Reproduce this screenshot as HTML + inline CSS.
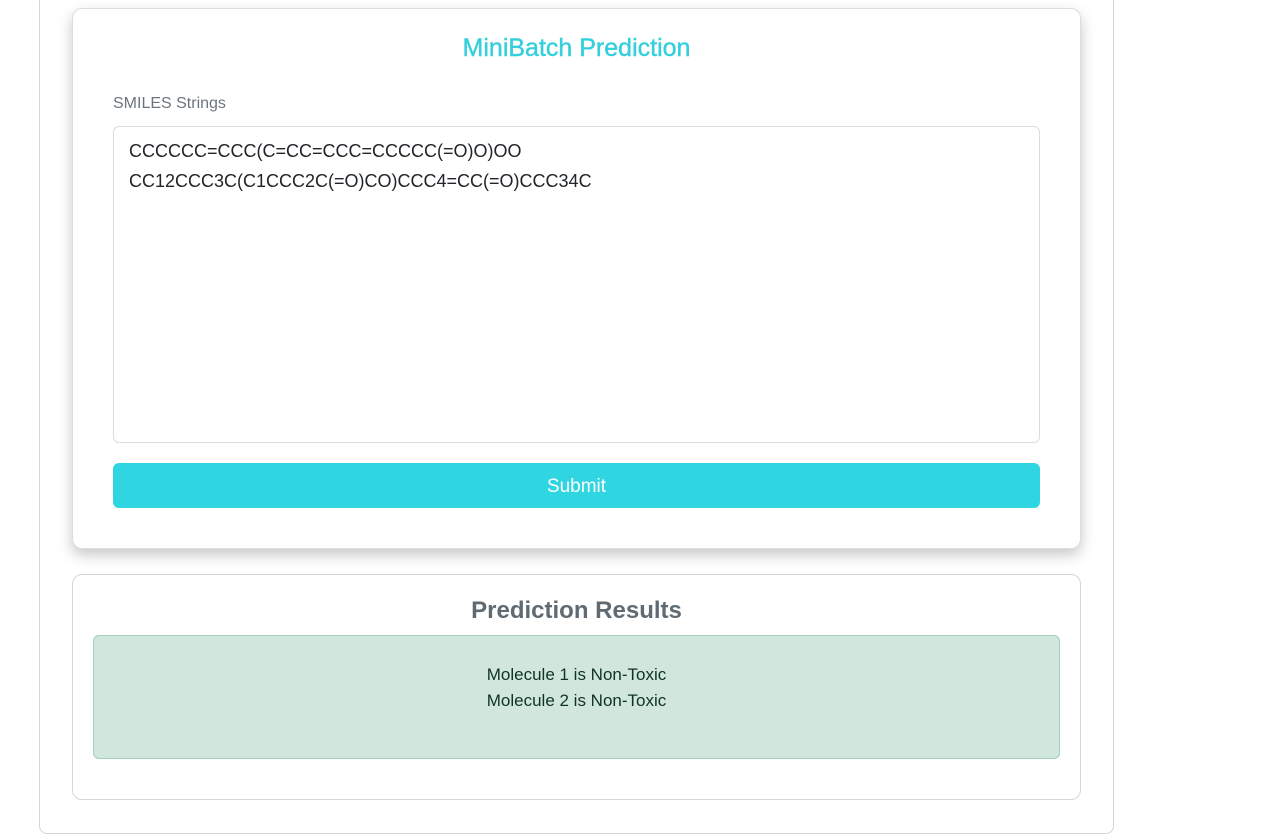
<!DOCTYPE html>
<html><head><style>
body{margin:0;background:#fff;font-family:"Liberation Sans",sans-serif;width:1263px;height:839px;overflow:hidden;position:relative}
.outer{position:absolute;left:39px;top:-10px;width:1075px;height:844px;border:1px solid #d6d6d6;border-radius:8px;box-sizing:border-box}
.c1{position:absolute;left:72px;top:8px;width:1009px;height:541px;border:1px solid #ddd;border-radius:10px;box-sizing:border-box;box-shadow:0 6px 14px rgba(0,0,0,.22);background:#fff}
h1{position:absolute;left:0;right:0;top:25px;margin:0;text-align:center;font-size:25px;color:#33cfdc;font-weight:normal;-webkit-text-stroke:.4px #33cfdc}
.lbl{position:absolute;left:40px;top:86px;font-size:16px;color:#6c757d}
.ta{position:absolute;left:40px;top:117px;width:927px;height:317px;border:1px solid #dcdcdc;border-radius:6px;box-sizing:border-box;padding:9px 15px;font-size:18px;line-height:30px;color:#212529}
.btn{position:absolute;left:40px;top:454px;width:927px;height:45px;background:#2fd5e0;border-radius:6px;color:#fff;font-size:19px;text-align:center;line-height:47px}
.c2{position:absolute;left:72px;top:574px;width:1009px;height:226px;border:1px solid #d6d6d6;border-radius:10px;box-sizing:border-box}
h2{position:absolute;left:0;right:0;top:22px;margin:0;text-align:center;font-size:24px;color:#5f6a72;font-weight:bold}
.al{position:absolute;left:20px;top:60px;width:967px;height:124px;background:#d1e7dd;border:1px solid #a3cfbb;border-radius:6px;box-sizing:border-box;text-align:center;color:#0f3324;font-size:17px;line-height:26px;padding-top:26px}
</style></head><body>
<div class="outer"></div>
<div class="c1"><h1>MiniBatch Prediction</h1><div class="lbl">SMILES Strings</div>
<div class="ta">CCCCCC=CCC(C=CC=CCC=CCCCC(=O)O)OO<br>CC12CCC3C(C1CCC2C(=O)CO)CCC4=CC(=O)CCC34C</div>
<div class="btn">Submit</div></div>
<div class="c2"><h2>Prediction Results</h2><div class="al">Molecule 1 is Non-Toxic<br>Molecule 2 is Non-Toxic</div></div>
</body></html>
